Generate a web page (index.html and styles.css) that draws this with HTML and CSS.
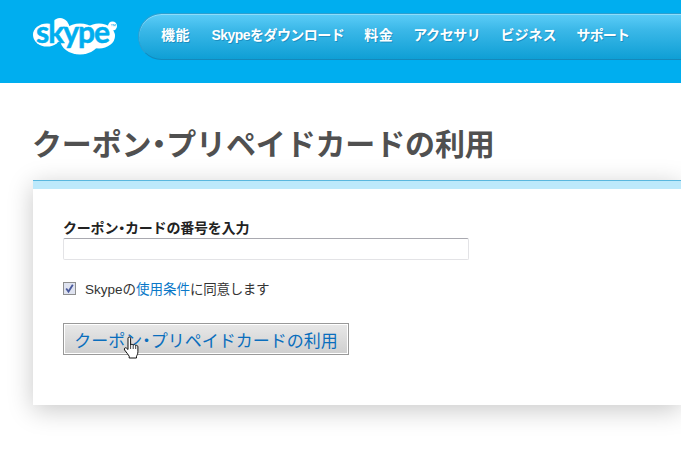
FILE: index.html
```html
<!DOCTYPE html>
<html lang="ja">
<head>
<meta charset="utf-8">
<title>クーポン・プリペイドカードの利用</title>
<link rel="stylesheet" href="styles.css">
</head>
<body>
<header class="site-header">
  <a class="logo" href="#">
    <svg class="logo-svg" viewBox="0 -6 84 44" width="84" height="44" aria-label="Skype">
      <g fill="#fff">
        <ellipse cx="14" cy="18" rx="14" ry="11.500"/>
        <ellipse cx="27" cy="13" rx="10" ry="12"/>
        <ellipse cx="47" cy="22" rx="20" ry="15.500"/>
        <ellipse cx="66" cy="19" rx="16" ry="12.500"/>
        <circle cx="79.500" cy="9" r="4.500"/>
      </g>
      <text class="logo-text" x="3" y="26">skype</text>
      <text class="logo-tm" x="77" y="11">™</text>
    </svg>
  </a>
  <nav class="main-nav">
    <a class="wide" href="#">機能</a>
    <a class="tight" href="#">Skypeをダウンロード</a>
    <a class="wide" href="#">料金</a>
    <a class="tight-small" href="#">アクセサリ</a>
    <a href="#">ビジネス</a>
    <a class="tighter" href="#">サポート</a>
  </nav>
</header>
<main class="content">
  <h1 class="title">クーポン<span class="dot">・</span>プリペイドカードの利用</h1>
  <section class="card">
    <div class="card-band"></div>
    <form class="card-body">
      <label class="field-label" for="code">クーポン<span class="dot">・</span>カードの番号を入力</label>
      <input class="field-input" id="code" type="text">
      <div class="agree">
        <span class="check">
          <svg viewBox="0 0 13 13" width="13" height="13"><rect x=".5" y=".5" width="12" height="12" fill="#dfe3f0" stroke="#8e8f8f"/><path d="M3.200 6.500 5.500 9.600 9.800 2.800" fill="none" stroke="#4a5a9c" stroke-width="1.800"/></svg>
        </span>
        <span class="agree-text">Skypeの<a href="#">使用条件</a><span class="agree-tail">に同意します</span></span>
      </div>
      <div class="submit-wrap">
        <button class="submit" type="button">クーポン<span class="dot">・</span>プリペイドカードの利用</button>
        <svg class="cursor" viewBox="0 0 18 24" width="18" height="24"><path d="M5 2.200c0-1.600 2.600-1.600 2.600 0V9c.4-1 2.300-1 2.600.2.5-.9 2.200-.8 2.500.4.6-.6 2.200-.3 2.200 1.200v5c0 2-.8 3.200-1.400 4.400v1.800H6.200v-1.800C5 18.400 3.200 16 1.600 14c-1-1.400.6-3 2-1.800L5 13.500z" fill="#fff" stroke="#111" stroke-width="1" stroke-linejoin="round"/><path d="M7.600 9v4M10.200 9.200V13M12.700 9.600V13" stroke="#111" stroke-width=".8" fill="none"/></svg>
      </div>
    </form>
  </section>
</main>
</body>
</html>
```
FILE: styles.css
```css
html, body { margin: 0; padding: 0; background: #fff; }
body {
  width: 681px; height: 455px; overflow: hidden;
  font-family: "Liberation Sans", "Noto Sans CJK JP", sans-serif;
  color: #333;
}
.site-header {
  height: 83px; background: #00aeef; box-sizing: border-box;
  display: flex; align-items: flex-start; padding: 11px 0 0 33px; gap: 21px;
}
.logo { display: block; flex: none; height: 44px; }
.logo-svg { display: block; }
.logo-text { font: bold 30px Lato, "Liberation Sans", sans-serif; letter-spacing: -1px; fill: #00aeef; stroke: #00aeef; stroke-width: .5px; }
.logo-tm { font: 6px "Liberation Sans", sans-serif; fill: #00aeef; }
.main-nav {
  flex: none; width: 543px; height: 47px; margin-top: 2px; box-sizing: border-box;
  border-radius: 24px 0 0 24px;
  border: 1px solid #2b9fd0; border-right: 0; border-bottom-color: #1488bb;
  background: linear-gradient(#5ccdf8 0%, #3bb8e8 35%, #0f9fd5 100%);
  box-shadow: inset 0 1px 0 #8edcfa;
  display: flex; align-items: center; padding: 0 0 5px 22px; gap: 20px;
}
.main-nav a {
  color: #fff; text-decoration: none; font-weight: bold; font-size: 14px;
  white-space: nowrap; text-shadow: 1px 1px 0 rgba(0,80,130,.35);
}
.main-nav .wide { letter-spacing: .5px; }
.main-nav .tight { letter-spacing: -.55px; margin-left: 1.500px; }
.main-nav .tight-small { letter-spacing: -.4px; }
.main-nav .tighter { letter-spacing: -.8px; }
.content { padding: 43px 0 0 33px; }
.title {
  margin: 0 0 0 -1px; font-size: 30px; line-height: 36px; font-weight: bold; color: #505050;
  white-space: nowrap; padding-top: 1px; height: 35px; box-sizing: content-box;
  letter-spacing: -.15px;
}
.dot { font-feature-settings: "palt"; }
.card {
  width: 648px; margin-top: 18px; background: #fff;
  box-shadow: 0 5px 24px rgba(0,0,0,.22);
  clip-path: inset(-40px 0 -40px -40px);
}
.card-band { height: 8px; background: #bde9fb; border-top: 1px solid #5ab7de; }
.card-body { display: block; height: 216px; box-sizing: border-box; padding: 31px 0 0 30px; }
.field-label { display: block; font-size: 14px; line-height: 17px; margin-bottom: 1px; font-weight: bold; color: #222; letter-spacing: -.2px; }
.field-input {
  display: block; width: 406px; height: 22px; box-sizing: border-box; margin: 0; padding: 0;
  border: 1px solid #e3e3e6; border-top-color: #a9a9b0; background: #fff; border-radius: 2px;
}
.agree { display: flex; align-items: flex-start; gap: 9px; height: 20px; margin-top: 19px; font-size: 13.500px; color: #333; }
.agree .check { display: block; width: 13px; height: 13px; margin-top: 3px; }
.agree svg { display: block; }
.agree-text { line-height: 22px; }
.agree a { color: #0a78c8; text-decoration: none; }
.agree-tail { letter-spacing: -.3px; }
.submit-wrap { position: relative; margin-top: 24px; width: 286px; }
.submit {
  display: block; width: 286px; height: 32px; box-sizing: border-box; margin: 0; padding: 0;
  border: 1px solid #999; outline: 1px solid #fff; outline-offset: -2px;
  background: linear-gradient(#e8e8e8, #cfcfcf);
  color: #0a6ebd; font: 17px "Liberation Sans", "Noto Sans CJK JP", sans-serif;
  white-space: nowrap;
}
.cursor { position: absolute; left: 60px; top: 13px; }
```
